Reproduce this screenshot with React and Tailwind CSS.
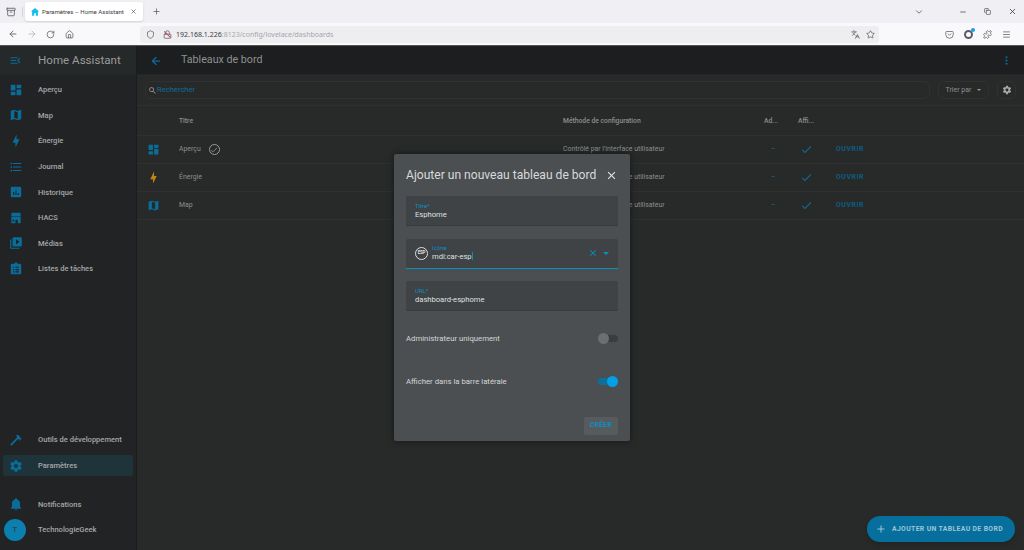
import React from 'react';
import { Archive, ArrowLeft, ArrowRight, ChevronDown, Copy, House, Languages, Lock, Menu, Minus, Plus, Puzzle, RotateCw, Shield, Star, X } from 'lucide-react';

const paths = {
  dashboard: 'M13,3V9H21V3M13,21H21V11H13M3,21H11V15H3M3,13H11V3H3V13Z',
  map: 'M15,19L9,16.89V5L15,7.11M20.5,3C20.44,3 20.39,3 20.34,3L15,5.1L9,3L3.36,4.9C3.15,4.97 3,5.15 3,5.38V20.5A0.5,0.5 0 0,0 3.5,21C3.55,21 3.61,21 3.66,20.97L9,18.9L15,21L20.64,19.1C20.85,19 21,18.85 21,18.62V3.5A0.5,0.5 0 0,0 20.5,3Z',
  bolt: 'M11 15H6L13 1V9H18L11 23V15Z',
  list: 'M7,5H21V7H7V5M7,13V11H21V13H7M4,4.5A1.5,1.5 0 0,1 5.5,6A1.5,1.5 0 0,1 4,7.5A1.5,1.5 0 0,1 2.5,6A1.5,1.5 0 0,1 4,4.5M4,10.5A1.5,1.5 0 0,1 5.5,12A1.5,1.5 0 0,1 4,13.5A1.5,1.5 0 0,1 2.5,12A1.5,1.5 0 0,1 4,10.5M7,19V17H21V19H7M4,16.5A1.5,1.5 0 0,1 5.5,18A1.5,1.5 0 0,1 4,19.5A1.5,1.5 0 0,1 2.5,18A1.5,1.5 0 0,1 4,16.5Z',
  chart: 'M19 3H5C3.9 3 3 3.9 3 5V19C3 20.1 3.9 21 5 21H19C20.1 21 21 20.1 21 19V5C21 3.9 20.1 3 19 3M9 17H7V12H9V17M13 17H11V9H13V17M17 17H15V14H17V17Z',
  hacs: 'M4 3H20V9H4V3M4 10H20V21H15V15H11V21H4V10M6 15V18H9V15H6Z',
  media: 'M4,6H2V20A2,2 0 0,0 4,22H18V20H4V6M20,2H8A2,2 0 0,0 6,4V16A2,2 0 0,0 8,18H20A2,2 0 0,0 22,16V4A2,2 0 0,0 20,2M12,14.5V5.5L18,10L12,14.5Z',
  tasks: 'M19,3H14.82C14.4,1.84 13.3,1 12,1C10.7,1 9.6,1.84 9.18,3H5A2,2 0 0,0 3,5V19A2,2 0 0,0 5,21H19A2,2 0 0,0 21,19V5A2,2 0 0,0 19,3M7,8H9V10H7V8M11,8H17V10H11V8M7,12H9V14H7V12M11,12H17V14H11V12M7,16H9V18H7V16M11,16H17V18H11V16Z',
  hammer: 'M2 19.63L13.43 8.2L12.72 7.5L14.14 6.07L12 3.89C13.2 2.7 15.09 2.7 16.27 3.89L19.87 7.5L18.45 8.91H21.29L22 9.62L18.45 13.21L17.74 12.5V9.62L16.27 11.04L15.56 10.33L4.13 21.76L2 19.63Z',
  cog: 'M12,15.5A3.5,3.5 0 0,1 8.5,12A3.5,3.5 0 0,1 12,8.5A3.5,3.5 0 0,1 15.5,12A3.5,3.5 0 0,1 12,15.5M19.43,12.97C19.47,12.65 19.5,12.33 19.5,12C19.5,11.67 19.47,11.34 19.43,11L21.54,9.37C21.73,9.22 21.78,8.95 21.66,8.73L19.66,5.27C19.54,5.05 19.27,4.96 19.05,5.05L16.56,6.05C16.04,5.66 15.5,5.32 14.87,5.07L14.5,2.42C14.46,2.18 14.25,2 14,2H10C9.75,2 9.54,2.18 9.5,2.42L9.13,5.07C8.5,5.32 7.96,5.66 7.44,6.05L4.95,5.05C4.73,4.96 4.46,5.05 4.34,5.27L2.34,8.73C2.21,8.95 2.27,9.22 2.46,9.37L4.57,11C4.53,11.34 4.5,11.67 4.5,12C4.5,12.33 4.53,12.65 4.57,12.97L2.46,14.63C2.27,14.78 2.21,15.05 2.34,15.27L4.34,18.73C4.46,18.95 4.73,19.03 4.95,18.95L7.44,17.94C7.96,18.34 8.5,18.68 9.13,18.93L9.5,21.58C9.54,21.82 9.75,22 10,22H14C14.25,22 14.46,21.82 14.5,21.58L14.87,18.93C15.5,18.67 16.04,18.34 16.56,17.94L19.05,18.95C19.27,19.03 19.54,18.95 19.66,18.73L21.66,15.27C21.78,15.05 21.73,14.78 21.54,14.63L19.43,12.97Z',
  bell: 'M21,19V20H3V19L5,17V11C5,7.9 7.03,5.17 10,4.29C10,4.19 10,4.1 10,4A2,2 0 0,1 12,2A2,2 0 0,1 14,4C14,4.1 14,4.19 14,4.29C16.97,5.17 19,7.9 19,11V17L21,19M14,21A2,2 0 0,1 12,23A2,2 0 0,1 10,21',
  menuOpen: 'M21,15.61L19.59,17L14.58,12L19.59,7L21,8.39L17.44,12L21,15.61M3,6H16V8H3V6M3,13V11H13V13H3M3,18V16H16V18H3Z',
  check: 'M21,7L9,19L3.5,13.5L4.91,12.09L9,16.17L19.59,5.59L21,7Z',
  dots: 'M12,16A2,2 0 0,1 14,18A2,2 0 0,1 12,20A2,2 0 0,1 10,18A2,2 0 0,1 12,16M12,10A2,2 0 0,1 14,12A2,2 0 0,1 12,14A2,2 0 0,1 10,12A2,2 0 0,1 12,10M12,4A2,2 0 0,1 14,6A2,2 0 0,1 12,8A2,2 0 0,1 10,6A2,2 0 0,1 12,4Z',
  magnify: 'M9.5,3A6.5,6.5 0 0,1 16,9.5C16,11.11 15.41,12.59 14.44,13.73L14.71,14H15.5L20.5,19L19,20.5L14,15.5V14.71L13.73,14.44C12.59,15.41 11.11,16 9.5,16A6.5,6.5 0 0,1 3,9.5A6.5,6.5 0 0,1 9.5,3M9.5,5C7,5 5,7 5,9.5C5,12 7,14 9.5,14C12,14 14,12 14,9.5C14,7 12,5 9.5,5Z',
  plus: 'M19,13H13V19H11V13H5V11H11V5H13V11H19V13Z',
  close: 'M19,6.41L17.59,5L12,10.59L6.41,5L5,6.41L10.59,12L5,17.59L6.41,19L12,13.41L17.59,19L19,17.59L13.41,12L19,6.41Z',
  pocket: 'M4 4H20A2 2 0 0 1 22 6V12A10 10 0 0 1 2 12V6A2 2 0 0 1 4 4M7.5 9.5L12 14L16.5 9.5',
  home: 'M12 2.5L2 10.5H5V21H10V15H14V21H19V10.5H22L12 2.5Z',
};

const Mdi = ({ d, className }) => (
  <svg viewBox="0 0 24 24" fill="currentColor" className={className}>
    <path d={d} />
  </svg>
);

const navTop = [
  ['dashboard', 'Aperçu'],
  ['map', 'Map'],
  ['bolt', 'Énergie'],
  ['list', 'Journal'],
  ['chart', 'Historique'],
  ['hacs', 'HACS'],
  ['media', 'Médias'],
  ['tasks', 'Listes de tâches'],
];

const rows = [
  { icon: 'dashboard', color: 'text-[#0a6d99]', title: 'Aperçu', isDefault: true },
  { icon: 'bolt', color: 'text-[#c0850f]', title: 'Énergie' },
  { icon: 'map', color: 'text-[#0a6d99]', title: 'Map' },
];

const NavItem = ({ icon, label, active }) => (
  <div className="flex h-[25.6px] items-center">
    <div className={`mx-[3px] flex h-[21px] w-[130px] items-center rounded-[2px] ${active ? 'bg-[#1f333b]' : ''}`}>
      <Mdi d={paths[icon]} className="ml-[5.5px] h-[14px] w-[14px] shrink-0 text-[#0a6d99]" />
      <span className="ml-[15.5px] text-[7.55px] font-medium text-[#a5a7a8]">{label}</span>
    </div>
  </div>
);

const Field = ({ label, value, children, focused }) => (
  <div className={`flex h-[30px] items-center rounded-t-[2px] bg-[#3f4345] px-[9px] ${focused ? 'border-b-[1.5px] border-[#0a8fc4]' : 'border-b border-[#393c3e]'}`}>
    {children}
    <div className="flex-1">
      <div className="text-[6px] leading-[7px] text-[#0a8fc4]">{label}</div>
      <div className="text-[7.6px] leading-[11px] text-[#dfe0e0]">
        {value}
        {focused && <span className="ml-[0.5px] inline-block h-[8px] w-px translate-y-[1px] bg-[#0a8fc4]" />}
      </div>
    </div>
    {focused && (
      <div className="flex items-center gap-[2px]">
        <Mdi d={paths.close} className="h-[10px] w-[10px] text-[#0a8fc4]" />
        <div className="ml-[3px] h-0 w-0 border-x-[3px] border-t-[3px] border-x-transparent border-t-[#0a8fc4]" />
      </div>
    )}
  </div>
);

const Toggle = ({ label, on }) => (
  <div className="flex h-[43px] items-center justify-between">
    <span className="text-[7.75px] text-[#d5d6d6]">{label}</span>
    <div className="relative h-[7px] w-[20px] rounded-full">
      <div className={`h-full w-full rounded-full ${on ? 'bg-[#0f6f9c]' : 'bg-[#3a3c3e]'}`} />
      <div className={`absolute top-[-2.5px] h-[11px] w-[11px] rounded-full ${on ? 'right-0 bg-[#03a0e6]' : 'left-0 bg-[#6c6e70]'}`} />
    </div>
  </div>
);

export default function App() {
  return (
    <div className="relative flex h-[550px] w-[1024px] flex-col overflow-hidden bg-[#282a2a] font-['Roboto',sans-serif]">
      {/* browser tabs */}
      <div className="flex h-[23px] items-center bg-[#f0f0f4]">
        <div className="flex w-[23px] justify-center border-r border-[#d5d5da]">
          <Archive className="h-[10px] w-[10px] text-[#5b5b66]" />
        </div>
        <div className="ml-[2px] flex h-[19px] w-[118px] items-center rounded-[3px] bg-white pr-[6px] pl-[5px] shadow-sm">
          <Mdi d={paths.home} className="h-[10px] w-[10px] shrink-0 text-[#18bcf2]" />
          <span className="ml-[2px] flex-1 text-[6.1px] whitespace-nowrap text-[#3a3a42]">Paramètres – Home Assistant</span>
          <X className="h-[7px] w-[7px] shrink-0 text-[#3a3a42]" />
        </div>
        <Plus className="ml-[9px] h-[9px] w-[9px] text-[#5b5b66]" />
        <div className="ml-auto flex items-center">
          <ChevronDown className="h-[10px] w-[10px] text-[#5b5b66]" />
          <Minus className="ml-[35px] h-[8px] w-[8px] text-[#333]" />
          <Copy className="ml-[16.5px] h-[7px] w-[7px] text-[#333]" />
          <X className="ml-[17px] mr-[7.5px] h-[9px] w-[9px] text-[#333]" />
        </div>
      </div>
      {/* browser toolbar */}
      <div className="flex h-[23px] items-center border-b border-[#555] bg-[#f9f9fb] text-[#5b5b66]">
        <ArrowLeft className="ml-[8px] h-[10px] w-[10px]" />
        <ArrowRight className="ml-[9px] h-[10px] w-[10px] text-[#b5b5ba]" />
        <RotateCw className="ml-[9px] h-[9px] w-[9px]" />
        <House className="ml-[10px] h-[9px] w-[9px]" />
        <div className="ml-[66px] flex h-[17px] w-[739px] items-center rounded-[3px] bg-[#eeeef0] pl-[6px]">
          <Shield className="h-[9px] w-[9px]" />
          <div className="relative ml-[8px] h-[9px] w-[9px]">
            <Lock className="h-[9px] w-[9px]" />
            <div className="absolute top-[4px] left-0 h-px w-[9px] rotate-45 bg-[#d0436a]" />
          </div>
          <span className="ml-[4px] font-['Noto_Sans',sans-serif] text-[7.03px] text-[#a5a5ad]">
            <span className="text-[#3a3a42]">192.168.1.226</span>:8123/config/lovelace/dashboards
          </span>
          <Languages className="ml-auto h-[9px] w-[9px]" />
          <Star className="ml-[6px] mr-[4px] h-[9px] w-[9px]" />
        </div>
        <div className="ml-[66px] flex items-center">
          <svg viewBox="0 0 24 24" fill="none" stroke="currentColor" strokeWidth="2" className="h-[9px] w-[9px]">
            <path d={paths.pocket} />
          </svg>
          <div className="relative ml-[10px] h-[9px] w-[9px] rounded-full border-2 border-[#5b5b66]">
            <div className="absolute top-[-4px] right-[-4px] h-[4px] w-[4px] rounded-full bg-[#1e9cf0]" />
          </div>
          <Puzzle className="ml-[10px] h-[9px] w-[9px]" />
          <Menu className="ml-[10px] h-[9px] w-[9px]" />
        </div>
      </div>

      <div className="flex min-h-0 flex-1">
        {/* sidebar */}
        <aside className="flex w-[137px] shrink-0 flex-col border-r border-[#1b1c1e] bg-[#212325]">
          <div className="flex h-[29px] shrink-0 items-center border-b border-[#232526] bg-[#26292a] pt-px pl-[9px]">
            <Mdi d={paths.menuOpen} className="h-[13px] w-[13px] text-[#0a6d99]" />
            <span className="ml-[16px] text-[11.6px] text-[#9a9c9d]">Home Assistant</span>
          </div>
          <nav className="mt-[2px]">
            {navTop.map(([icon, label]) => (
              <NavItem key={label} icon={icon} label={label} />
            ))}
          </nav>
          <div className="mt-auto">
            <NavItem icon="hammer" label="Outils de développement" />
            <NavItem icon="cog" label="Paramètres" active />
          </div>
          <div className="mt-[13px] mb-[8px]">
            <NavItem icon="bell" label="Notifications" />
            <div className="flex h-[25px] items-center">
              <div className="ml-[4px] flex h-[22px] w-[22px] items-center justify-center rounded-full bg-[#0a7fb0] text-[8px] text-[#333]">T</div>
              <span className="ml-[12px] text-[7.55px] font-medium text-[#a5a7a8]">TechnologieGeek</span>
            </div>
          </div>
        </aside>

        {/* main */}
        <main className="flex min-w-0 flex-1 flex-col">
          <header className="flex h-[29px] shrink-0 items-center border-b border-[#232526] bg-[#1c1e20] pt-px pl-[13px]">
            <ArrowLeft strokeWidth={2.5} className="h-[12px] w-[12px] text-[#0a6d99]" />
            <span className="ml-[19px] text-[10.7px] text-[#8f9192]">Tableaux de bord</span>
            <Mdi d={paths.dots} className="mr-[11px] ml-auto h-[13px] w-[13px] text-[#0a6d99]" />
          </header>

          <div className="flex h-[31px] shrink-0 items-center border-b border-[#2f3131] pr-[8px] pl-[8px]">
            <div className="flex h-[18px] w-[785px] items-center rounded-[6px] border border-[#303232] pl-[2px]">
              <Mdi d={paths.magnify} className="h-[9px] w-[9px] text-[#999]" />
              <span className="text-[7.6px] text-[#0a6d99]">Rechercher</span>
            </div>
            <div className="ml-[8px] flex h-[18px] w-[51px] items-center justify-center rounded-[6px] border border-[#303232]">
              <span className="text-[7px] text-[#8c8e8e]">Trier par</span>
              <div className="ml-[6px] h-0 w-0 border-x-[2.5px] border-t-[2.5px] border-x-transparent border-t-[#999]" />
            </div>
            <div className="ml-[8px] flex h-[18px] w-[19px] items-center justify-center rounded-[6px] border border-[#303232]">
              <Mdi d={paths.cog} className="h-[10px] w-[10px] text-[#a5a7a8]" />
            </div>
          </div>

          {/* table */}
          <div className="flex h-[30px] shrink-0 items-center border-b border-[#2f3131] pt-px text-[6.75px] font-medium text-[#8c8e8e]">
            <span className="ml-[42px] w-[384px]">Titre</span>
            <span className="w-[201px]">Méthode de configuration</span>
            <span className="w-[34px]">Ad...</span>
            <span>Affi...</span>
          </div>
          {rows.map((row) => (
            <div key={row.title} className="flex h-[28px] shrink-0 items-center border-b border-[#2f3131] text-[6.9px] text-[#8c8e8e]">
              <Mdi d={paths[row.icon]} className={`ml-[10px] h-[13px] w-[13px] shrink-0 ${row.color}`} />
              <div className="ml-[19px] flex w-[384px] items-center">
                {row.title}
                {row.isDefault && (
                  <span className="ml-[8px] flex h-[11px] w-[11px] items-center justify-center rounded-full border border-[#999]">
                    <Mdi d={paths.check} className="h-[8px] w-[8px] text-[#999]" />
                  </span>
                )}
              </div>
              <span className="w-[201px]">Contrôlé par l'interface utilisateur</span>
              <span className="w-[34px] pl-[7px] text-[#0a6d99]">–</span>
              <Mdi d={paths.check} className="ml-[2px] h-[13px] w-[13px] shrink-0 text-[#0a6d99]" />
              <span className="ml-[23px] text-[7px] font-bold tracking-[0.5px] text-[#0a5d82]">OUVRIR</span>
            </div>
          ))}
        </main>
      </div>

      {/* dialog */}
      <div className="absolute top-[154px] left-[394px] h-[287px] w-[236px] rounded-[2px] bg-[#4b4f52] px-[12px] shadow-[0_0_6px_rgba(0,0,0,0.5)]">
        <div className="flex h-[42px] items-center justify-between">
          <span className="text-[12.08px] whitespace-nowrap text-[#d8d9d9]">Ajouter un nouveau tableau de bord</span>
          <Mdi d={paths.close} className="h-[13px] w-[13px] text-[#e5e5e5]" />
        </div>
        <div className="flex flex-col gap-[12.5px]">
          <Field label="Titre*" value="Esphome" />
          <Field label="Icône" value="mdi:car-esp" focused>
            <div className="mr-[4px] flex h-[13px] w-[13px] shrink-0 items-center justify-center rounded-full border border-[#ddd] text-[4.6px] leading-none font-bold tracking-tighter text-[#ddd]">ESP</div>
          </Field>
          <Field label="URL*" value="dashboard-esphome" />
        </div>
        <div className="mt-[6px]">
          <Toggle label="Administrateur uniquement" />
          <Toggle label="Afficher dans la barre latérale" on />
        </div>
        <div className="mt-[14px] flex justify-end">
          <div className="flex h-[18px] w-[34px] items-center justify-center rounded-[2px] bg-[#585b5e] text-[6.6px] font-bold tracking-[0.4px] text-[#0a8fc4]">CRÉER</div>
        </div>
      </div>

      {/* fab */}
      <div className="absolute top-[516px] left-[867px] flex h-[26px] w-[148px] items-center rounded-full bg-[#066f9e] pl-[8px] shadow-md">
        <Mdi d={paths.plus} className="h-[12px] w-[12px] text-[#9fc4d6]" />
        <span className="ml-[5px] text-[6.8px] font-bold tracking-[0.38px] whitespace-nowrap text-[#9fc4d6]">AJOUTER UN TABLEAU DE BORD</span>
      </div>
    </div>
  );
}
